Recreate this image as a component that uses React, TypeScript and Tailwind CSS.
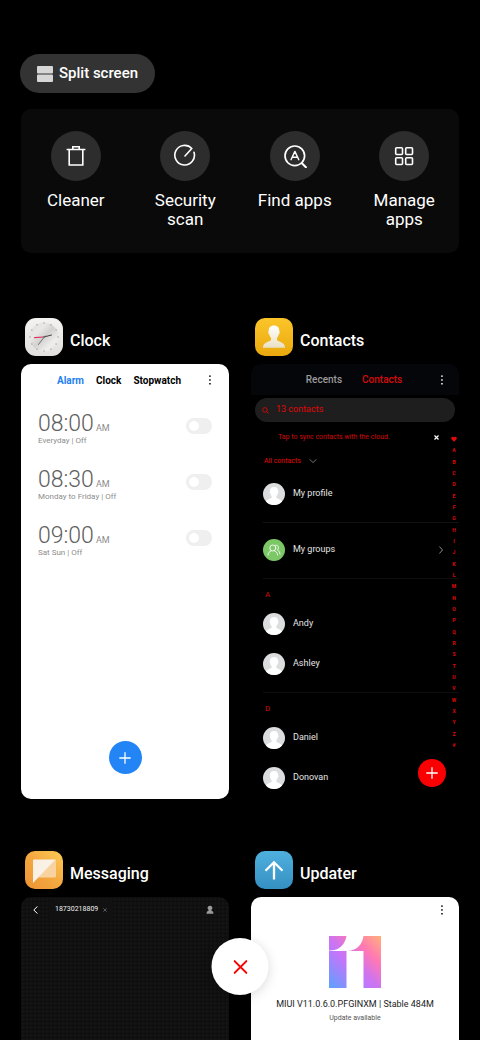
import { useState } from 'react'
import type { ReactNode } from 'react'

const alarms = [
  { time: '08:00', repeat: 'Everyday' },
  { time: '08:30', repeat: 'Monday to Friday' },
  { time: '09:00', repeat: 'Sat Sun' },
]

const groups = [
  { letter: 'A', names: ['Andy', 'Ashley'] },
  { letter: 'D', names: ['Daniel', 'Donovan'] },
]

const letters = 'ABCDEFGHIJKLMNOPQRSTUVWXYZ#'.split('')

const tools = [
  { label: 'Cleaner', icon: <TrashIcon /> },
  { label: 'Security scan', icon: <ScanIcon /> },
  { label: 'Find apps', icon: <FindIcon /> },
  { label: 'Manage apps', icon: <GridIcon /> },
]

function TrashIcon() {
  return (
    <svg className="w-6 h-6" viewBox="0 0 24 24" fill="none" stroke="currentColor" strokeWidth="1.6">
      <path d="M2.600 5.500h18.800M5.200 5.500v15.500h13.600V5.500M8.800 5.200V2.800h6.400v2.400" />
    </svg>
  )
}

function ScanIcon() {
  return (
    <svg className="w-6 h-6" viewBox="0 0 24 24" fill="none" stroke="currentColor" strokeWidth="1.6" strokeLinecap="round">
      <path d="M21 8.300A9.800 9.800 0 1 1 18.800 4.500L12 12" strokeLinejoin="round" />
    </svg>
  )
}

function FindIcon() {
  return (
    <svg className="w-6 h-6" viewBox="0 0 24 24" fill="none" stroke="currentColor" strokeWidth="1.7" strokeLinecap="round">
      <circle cx="11.800" cy="11.800" r="9.800" />
      <path d="M18.900 19.200l4 4" strokeWidth="2" />
      <path d="M8 15.700l3.900-8.300 3.900 8.300M9.200 13.200h5.400" strokeWidth="1.400" strokeLinejoin="round" />
    </svg>
  )
}

function GridIcon() {
  return (
    <svg className="w-6 h-6" viewBox="0 0 24 24" fill="none" stroke="currentColor" strokeWidth="1.6">
      <rect x="3.700" y="3.700" width="6.800" height="6.800" rx="1" />
      <rect x="13.700" y="3.700" width="6.800" height="6.800" rx="1" />
      <rect x="3.700" y="13.700" width="6.800" height="6.800" rx="1" />
      <rect x="13.700" y="13.700" width="6.800" height="6.800" rx="1" />
    </svg>
  )
}

function DotsIcon() {
  return (
    <svg className="w-3 h-3" viewBox="0 0 12 12" fill="currentColor">
      <rect x="5.200" y="1.400" width="1.500" height="1.500" />
      <rect x="5.200" y="5.200" width="1.500" height="1.500" />
      <rect x="5.200" y="9" width="1.500" height="1.500" />
    </svg>
  )
}

function PlusIcon() {
  return (
    <svg className="w-3 h-3" viewBox="0 0 12 12" fill="none" stroke="currentColor" strokeWidth="1.3">
      <path d="M6 0.300v11.400M0.300 6h11.400" />
    </svg>
  )
}

function ClockLogo() {
  const ticks = Array.from({ length: 12 }, (_, i) => i * 30)
  return (
    <svg className="w-[38px] h-[38px]" viewBox="0 0 38 38">
      <defs>
        <linearGradient id="clockBg" x1="0" y1="0" x2="0" y2="1">
          <stop offset="0" stopColor="#f4f3f2" />
          <stop offset="1" stopColor="#e2e0de" />
        </linearGradient>
        <linearGradient id="clockFace" x1="0" y1="0" x2="1" y2="1">
          <stop offset="0" stopColor="#dedcdb" />
          <stop offset="0.3" stopColor="#e9e8e7" />
          <stop offset="0.5" stopColor="#d3d2d1" />
          <stop offset="0.75" stopColor="#efeeee" />
          <stop offset="1" stopColor="#dedcdb" />
        </linearGradient>
      </defs>
      <rect width="38" height="38" rx="11" fill="url(#clockBg)" />
      <circle cx="19" cy="19" r="14.500" fill="url(#clockFace)" />
      {ticks.map(a => (
        <circle key={a} cx="19" cy="5" r="0.7" fill="#9b9999" transform={`rotate(${a} 19 19)`} />
      ))}
      <path d="M19 19l7.500-2" stroke="#444" strokeWidth="1" strokeLinecap="round" />
      <path d="M20 18l-6.500 8.500" stroke="#555" strokeWidth="0.800" strokeLinecap="round" />
      <path d="M19 19l-9.500.6" stroke="#e0305e" strokeWidth="1.100" strokeLinecap="round" />
      <circle cx="19" cy="19" r="0.9" fill="#777" />
    </svg>
  )
}

function ContactsLogo() {
  return (
    <svg className="w-[38px] h-[38px]" viewBox="0 0 38 38">
      <defs>
        <linearGradient id="contactsBg" x1="0" y1="0" x2="0" y2="1">
          <stop offset="0" stopColor="#fbc52a" />
          <stop offset="1" stopColor="#eaa90e" />
        </linearGradient>
        <linearGradient id="contactsMan" x1="0" y1="0" x2="0" y2="1">
          <stop offset="0" stopColor="#ffffff" />
          <stop offset="1" stopColor="#e9e0c4" />
        </linearGradient>
      </defs>
      <rect width="38" height="38" rx="10" fill="url(#contactsBg)" />
      <path
        d="M19 7.600c3.600 0 5.500 2.200 5.300 5.600.8.400.4 2.800-.6 3.200-.4 1.600-1 2.600-1.700 3.400v2.200c1.400 2.400 8 1.400 8 7.800H8c0-6.400 6.600-5.400 8-7.800v-2.200c-.7-.8-1.300-1.800-1.700-3.400-1-.4-1.400-2.800-.6-3.200-.2-3.400 1.700-5.600 5.300-5.600z"
        fill="url(#contactsMan)"
      />
    </svg>
  )
}

function MessagingLogo() {
  return (
    <svg className="w-[38px] h-[38px]" viewBox="0 0 38 38">
      <defs>
        <linearGradient id="msgBg" x1="1" y1="0" x2="0" y2="1">
          <stop offset="0" stopColor="#fccb55" />
          <stop offset="0.5" stopColor="#f4a83f" />
          <stop offset="1" stopColor="#ec9336" />
        </linearGradient>
        <linearGradient id="msgFold" x1="0" y1="0" x2="1" y2="1">
          <stop offset="0" stopColor="#f8efe2" />
          <stop offset="1" stopColor="#fdf6ec" />
        </linearGradient>
      </defs>
      <rect width="38" height="38" rx="10" fill="url(#msgBg)" />
      <path d="M30 8.600a1 1 0 0 1 1 1V25a1.500 1.500 0 0 1-1.500 1.500H13z" fill="#f8d3a0" />
      <path d="M9 8.600h21.500L8 32V9.600a1 1 0 0 1 1-1z" fill="url(#msgFold)" />
    </svg>
  )
}

function UpdaterLogo() {
  return (
    <svg className="w-[38px] h-[38px]" viewBox="0 0 38 38">
      <defs>
        <linearGradient id="updBg" x1="0" y1="0" x2="0" y2="1">
          <stop offset="0" stopColor="#4fb0de" />
          <stop offset="1" stopColor="#3590c2" />
        </linearGradient>
      </defs>
      <rect width="38" height="38" rx="10" fill="url(#updBg)" />
      <path d="M19 28.500V11.500M10.500 19.800L19 11.300l8.500 8.500" fill="none" stroke="#fff" strokeWidth="2.300" />
    </svg>
  )
}

function MiuiLogo() {
  return (
    <svg className="w-[52px] h-[52px]" viewBox="0 0 52 52" role="img" aria-label="MIUI 11">
      <defs>
        <linearGradient id="miui" gradientUnits="userSpaceOnUse" x1="0" y1="52" x2="52" y2="0">
          <stop offset="0" stopColor="#5aa2ff" />
          <stop offset="0.4" stopColor="#c276fa" />
          <stop offset="0.5" stopColor="#cf74ee" />
          <stop offset="0.72" stopColor="#ff78b4" />
          <stop offset="1" stopColor="#ffb07a" />
        </linearGradient>
      </defs>
      <g fill="url(#miui)">
        <path d="M0 0h17.500C16 8 11 14 2 14.500H0z" />
        <path d="M0 15h17.500v37H0z" />
        <path d="M34.500 0H52v52H34.500V15H19C28 14 33 9 34.500 0z" />
      </g>
    </svg>
  )
}

function Avatar() {
  return (
    <svg className="w-[22px] h-[22px] rounded-full bg-[#dcddde]" viewBox="0 0 22 22">
      <path
        d="M11 4c3 0 4.300 2 4.200 4.500.5.500.2 1.800-.5 2.200-.3 1.200-.8 1.800-1.300 2.400v1.600c1.200 1.200 5.600 1.600 6.200 5.300v2H2.400v-2c.6-3.700 5-4.100 6.200-5.300v-1.600c-.5-.6-1-1.200-1.300-2.400-.7-.4-1-1.700-.5-2.200C6.700 6 8 4 11 4z"
        fill="#fff"
      />
    </svg>
  )
}

function AppTile({ title, logo, children }: { title: string; logo: ReactNode; children: ReactNode }) {
  return (
    <section>
      <header className="flex items-center gap-[7px] pl-1 mb-2">
        {logo}
        <h2 className="pt-2 text-base leading-5 font-medium">{title}</h2>
      </header>
      {children}
    </section>
  )
}

function ClockCard() {
  return (
    <div className="min-h-[435px] rounded-[10px] bg-white text-black flex flex-col">
      <nav className="h-8 px-[13px] flex items-center text-[10px] font-bold">
        <div className="flex-1 flex justify-center gap-3">
          <button className="text-[#1f80f2]">Alarm</button>
          <button>Clock</button>
          <button>Stopwatch</button>
        </div>
        <button aria-label="More"><DotsIcon /></button>
      </nav>
      <ul className="flex-1 pt-[5px] px-[17px]">
        {alarms.map(alarm => (
          <li key={alarm.time} className="h-14 flex items-center justify-between text-[#8c8c8c]">
            <div>
              <p className="text-[23px] leading-6 font-light text-[#606060]">
                {alarm.time}
                <span className="ml-0.5 text-[9px] leading-none font-normal text-[#8c8c8c]">AM</span>
              </p>
              <p className="text-[8px] leading-[10px]">{alarm.repeat} | Off</p>
            </div>
            <label className="pb-1.5 flex">
              <input
                type="checkbox"
                aria-label={`Alarm ${alarm.time}`}
                className="appearance-none w-[26px] h-4 p-[3px] rounded-full bg-[#efefef] before:block before:w-2.5 before:h-2.5 before:rounded-full before:bg-white checked:bg-[#1f80f2] checked:before:ml-2.5"
              />
            </label>
          </li>
        ))}
      </ul>
      <button aria-label="Add alarm" className="self-center mb-[25px] w-[33px] h-[33px] rounded-full bg-[#2284f5] text-white flex items-center justify-center">
        <PlusIcon />
      </button>
    </div>
  )
}

function ContactRow({ name, icon }: { name: string; icon?: ReactNode }) {
  return (
    <div className="h-10 flex items-center gap-2 text-[9px] text-[#e4e4e4]">
      {icon ?? <Avatar />}
      {name}
    </div>
  )
}

function ContactsCard() {
  return (
    <div className="relative min-h-[435px] rounded-[10px] overflow-hidden">
      <nav className="h-[31px] px-[11px] flex items-center bg-[#05060a] text-[10px] font-medium">
        <div className="flex-1 flex justify-center gap-5 pl-2.5">
          <button className="text-[#9b9b9b]">Recents</button>
          <button className="text-[#d90808]">Contacts</button>
        </div>
        <button aria-label="More"><DotsIcon /></button>
      </nav>
      <label className="mt-[3px] mx-1 h-6 px-[7px] rounded-full bg-[#1e1e1e] flex items-center gap-[7px] text-[#d90808]">
        <svg className="w-[7px] h-[7px]" viewBox="0 0 7 7" fill="none" stroke="currentColor" strokeWidth="0.9">
          <circle cx="2.900" cy="2.900" r="2.300" />
          <path d="M4.600 4.600l2.100 2.100" />
        </svg>
        <input type="text" placeholder="13 contacts" aria-label="Search contacts" className="flex-1 min-w-0 bg-transparent outline-none text-[9px] placeholder:text-[#e00808]" />
      </label>
      <div className="h-[30px] pl-[27px] pr-5 flex items-center justify-between text-[7px] text-[#d00808]">
        Tap to sync contacts with the cloud.
        <button aria-label="Dismiss" className="text-white">
          <svg className="w-[5px] h-[5px]" viewBox="0 0 5 5" stroke="currentColor" strokeWidth="1.200">
            <path d="M0.500 0.500l4 4M4.500 0.500l-4 4" />
          </svg>
        </button>
      </div>
      <div className="h-[18px] pl-[13px] flex items-center gap-2 text-[7px] text-[#e00808]">
        <select aria-label="Contact list" className="appearance-none bg-transparent outline-none">
          <option>All contacts</option>
        </select>
        <svg className="w-2 h-1" viewBox="0 0 8 4" fill="none" stroke="#8a8a8a" strokeWidth="0.800">
          <path d="M0.500 0.300L4 3.500 7.500 0.300" />
        </svg>
      </div>
      <div className="ml-3 pt-1 pb-2 border-b border-[#121212]">
        <ContactRow name="My profile" />
      </div>
      <div className="ml-3 pt-[7px] pb-2 pr-4 flex items-center justify-between border-b border-[#0e0e0e]">
        <ContactRow
          name="My groups"
          icon={
            <svg className="w-[22px] h-[22px] rounded-full bg-[#7cc867]" viewBox="0 0 22 22" fill="none" stroke="#fff" strokeWidth="0.900" strokeLinecap="round">
              <circle cx="9.800" cy="9" r="3" />
              <path d="M5 16c.2-2.300 1.400-3.600 3.200-4.200M14.600 16c-.2-2.300-1.400-3.600-3.200-4.200M12.600 6.200c2.600-.6 4 2.800 1.800 4.800 1.600.8 2.400 2 2.600 4" />
            </svg>
          }
        />
        <svg className="w-1 h-2" viewBox="0 0 4 8" fill="none" stroke="#9a9a9a" strokeWidth="0.900">
          <path d="M0.400 0.500L3.500 4 0.400 7.500" />
        </svg>
      </div>
      {groups.map(group => (
        <div key={group.letter} className="ml-3 pb-2 border-b border-[#0e0e0e] last-of-type:pb-0 last-of-type:border-0">
          <h3 className="h-[25px] pt-1.5 pl-0.5 flex items-center text-[8px] text-[#d00808]">{group.letter}</h3>
          {group.names.map(name => (
            <ContactRow key={name} name={name} />
          ))}
        </div>
      ))}
      {/* Letter index over the list */}
      <nav className="absolute top-[72px] right-0.5 w-1.5 h-[312px] flex flex-col items-center justify-between text-[5px] leading-[6px] font-bold text-[#e00808]">
        <svg className="w-1.5 h-1.5 shrink-0" viewBox="0 0 6 6" fill="currentColor">
          <path d="M3 5.800L.5 3.200C-.6 1.500 1.600-.3 3 1.300 4.400-.3 6.600 1.500 5.500 3.200z" />
        </svg>
        {letters.map(letter => (
          <a key={letter} href={`#${letter}`}>{letter}</a>
        ))}
      </nav>
      <button aria-label="Add contact" className="absolute right-[13px] bottom-3 w-7 h-7 rounded-full bg-[#fb0003] text-white flex items-center justify-center">
        <PlusIcon />
      </button>
    </div>
  )
}

function MessagingCard() {
  return (
    <div className="min-h-[435px] rounded-[10px] bg-[#101010] bg-[radial-gradient(circle_at_50%_60%,#141414_0_1px,#0e0e0e_2px)] bg-[length:4px_4px]">
      <div className="h-[25px] pl-3 pr-3.5 flex items-center text-white">
        <button aria-label="Back">
          <svg className="w-[5px] h-2" viewBox="0 0 5 8" fill="none" stroke="currentColor" strokeWidth="1">
            <path d="M4.500 0.400L0.800 4l3.700 3.600" />
          </svg>
        </button>
        <div className="ml-[11px] h-5 px-1.5 flex items-center gap-[5px] rounded-sm bg-[#111] text-[7px] text-[#f0f0f0]">
          18730218809
          <button aria-label="Remove recipient">
            <svg className="w-1 h-1" viewBox="0 0 4 4" stroke="#777" strokeWidth="0.700">
              <path d="M0.300 0.300l3.400 3.400M3.700 0.300L0.300 3.700" />
            </svg>
          </button>
        </div>
        <button aria-label="Contact" className="ml-auto">
          <svg className="w-2.5 h-2.5" viewBox="0 0 10 10" fill="#9a9a9a">
            <path d="M5 .8a2.200 2.200 0 0 1 1.300 4.100v.6C7.500 6 8.500 6.600 8.500 8.800h-7C1.500 6.600 2.500 6 3.700 5.500v-.6A2.200 2.200 0 0 1 5 .8z" />
          </svg>
        </button>
      </div>
    </div>
  )
}

function UpdaterCard() {
  return (
    <div className="min-h-[435px] rounded-[10px] bg-white text-black flex flex-col items-center">
      <button aria-label="More" className="self-end h-[25px] mr-[11px]"><DotsIcon /></button>
      <div className="pt-3.5">
        <MiuiLogo />
      </div>
      <p className="mt-2.5 text-[9px] leading-3 text-[#222]">MIUI V11.0.6.0.PFGINXM | Stable 484M</p>
      <p className="mt-0.5 text-[7px] leading-3 text-[#555]">Update available</p>
    </div>
  )
}

export default function App() {
  const [open, setOpen] = useState(true)

  return (
    <div className="h-screen overflow-hidden bg-black text-white font-[Roboto,sans-serif]">
      <div className="px-5 pt-[54px]">
        <button className="h-[39px] px-[17px] rounded-full bg-[#333] flex items-center gap-1.5 text-[15px] font-medium">
          <svg className="w-4 h-4" viewBox="0 0 16 16" fill="#d6d6d6">
            <rect width="16" height="7.400" rx="1" />
            <rect y="8.600" width="16" height="7.400" rx="1" />
          </svg>
          Split screen
        </button>
      </div>

      <main className="px-[21px]">
        <div className="mt-4 min-h-36 pt-[22px] rounded-[10px] bg-[#0a0a0a] grid grid-cols-4">
          {tools.map(tool => (
            <button key={tool.label} className="flex flex-col items-center gap-2.5">
              <span className="w-[50px] h-[50px] rounded-full bg-[#2d2d2d] flex items-center justify-center">{tool.icon}</span>
              <span className="px-4 text-[17px] leading-[19px]">{tool.label}</span>
            </button>
          ))}
        </div>

        {/* Recent apps */}
        {open && (
          <div className="mt-[65px] grid grid-cols-2 gap-x-[22px] gap-y-[52px]">
            <AppTile title="Clock" logo={<ClockLogo />}><ClockCard /></AppTile>
            <AppTile title="Contacts" logo={<ContactsLogo />}><ContactsCard /></AppTile>
            <AppTile title="Messaging" logo={<MessagingLogo />}><MessagingCard /></AppTile>
            <AppTile title="Updater" logo={<UpdaterLogo />}><UpdaterCard /></AppTile>
          </div>
        )}
      </main>

      <button
        aria-label="Close all"
        onClick={() => setOpen(false)}
        className="fixed bottom-[45px] left-1/2 -translate-x-1/2 w-[57px] h-[57px] rounded-full bg-white shadow-[0_2px_12px_rgba(0,0,0,0.15)] text-[#f40606] flex items-center justify-center"
      >
        <svg className="w-3.5 h-3.5" viewBox="0 0 14 14" fill="none" stroke="currentColor" strokeWidth="1.900">
          <path d="M0.500 0.500l13 13M13.500 0.500l-13 13" />
        </svg>
      </button>
    </div>
  )
}
